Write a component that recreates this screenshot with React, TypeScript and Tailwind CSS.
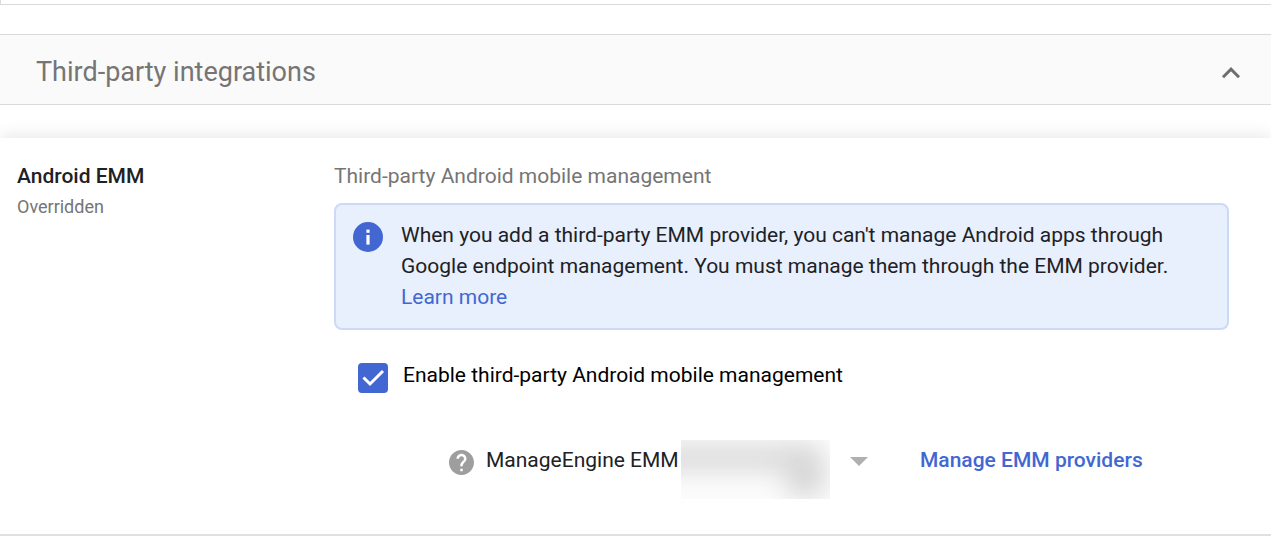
import { useState } from 'react';

function InfoIcon() {
  return (
    <svg viewBox="0 0 30 30" className="mt-0.5 size-[30px] shrink-0" aria-hidden="true">
      <circle cx="15" cy="15" r="15" fill="#4267d2" />
      <rect x="13.4" y="7.6" width="3.2" height="3.2" fill="#fff" />
      <rect x="13.4" y="13" width="3.2" height="9.6" fill="#fff" />
    </svg>
  );
}

function HelpIcon() {
  return (
    <svg viewBox="2 2 20 20" className="size-[25px]" aria-hidden="true">
      <path
        fill="#9e9e9e"
        d="M12 2C6.48 2 2 6.48 2 12s4.48 10 10 10 10-4.48 10-10S17.52 2 12 2zm1 17h-2v-2h2v2zm2.07-7.75l-.9.92C13.45 12.9 13 13.5 13 15h-2v-.5c0-1.1.45-2.1 1.17-2.83l1.24-1.26c.37-.36.59-.86.59-1.41 0-1.1-.9-2-2-2s-2 .9-2 2H8c0-2.21 1.79-4 4-4s4 1.79 4 4c0 .88-.36 1.68-.93 2.25z"
      />
    </svg>
  );
}

function SectionHeader() {
  return (
    <button
      type="button"
      aria-expanded="true"
      className="mt-[29px] flex w-full items-center justify-between border-y border-[#dadada] bg-[#fafafa] pt-5 pr-[30px] pb-[14px] pl-9 text-left"
    >
      <span className="text-[27px] leading-[35px] text-[#757575]">Third-party integrations</span>
      <svg viewBox="0 0 20 20" className="size-5" fill="none" stroke="#6e6e6e" strokeWidth="3" aria-hidden="true">
        <path d="M2 14.2L10 6.2L18 14.2" />
      </svg>
    </button>
  );
}

function InfoBox() {
  return (
    <div className="mt-[11px] flex gap-[18px] rounded-lg border-2 border-[#cddaf6] bg-[#e8effd] px-[17px] py-[15px]">
      <InfoIcon />
      <p className="max-w-[780px] text-[21px] leading-[31px] text-[#202124]">
        When you add a third-party EMM provider, you can't manage Android apps through Google endpoint management. You
        must manage them through the EMM provider.
        <br />
        <a href="#learn-more" className="text-[#4267d2]">
          Learn more
        </a>
      </p>
    </div>
  );
}

function ProviderSelect() {
  return (
    <div className="relative">
      <select
        aria-label="EMM provider"
        className="block w-[382px] appearance-none bg-transparent text-[21px] leading-[31px] text-[#202124] outline-none"
      >
        <option>ManageEngine EMM</option>
      </select>
      {/* account name is hidden behind a smudge */}
      <div className="pointer-events-none absolute top-[-5px] left-[195px] h-[59px] w-[149px] overflow-hidden bg-[#fcfcfc]">
        <div className="absolute top-1 -left-8 h-7 w-[170px] bg-[#dcdcdc] blur-[12px]" />
        <div className="absolute top-5 left-[106px] h-9 w-9 rounded-full bg-[#cccccc] blur-[14px]" />
      </div>
      <svg
        viewBox="0 0 18 9"
        className="pointer-events-none absolute top-3 right-0 h-[9px] w-[18px]"
        aria-hidden="true"
      >
        <path d="M0 0h18L9 9z" fill="#b0b0b0" />
      </svg>
    </div>
  );
}

export default function App() {
  const [enabled, setEnabled] = useState(true);

  return (
    <div className="bg-white font-[Roboto,sans-serif]">
      {/* bottom edge of the previous section */}
      <div className="h-[5px] border-b border-l border-[#dadada]" />

      <SectionHeader />

      <section className="mt-[33px] flex border-b-2 border-[#e0e0e0] pt-[23px] pr-[42px] pb-[58px] pl-[17px] shadow-[0_-2px_16px_rgba(0,0,0,0.10)]">
        <div className="w-[317px] shrink-0">
          <h2 className="text-[21px] leading-[31px] font-medium text-[#202124]">Android EMM</h2>
          <p className="text-lg leading-[29px] text-[#757575]">Overridden</p>
        </div>

        <div className="min-w-0 flex-1">
          <h3 className="text-[21px] leading-[31px] text-[#757575]">Third-party Android mobile management</h3>
          <InfoBox />

          <div className="mt-[30px] flex items-center gap-[15px] pl-6">
            <span className="relative size-[30px]">
              <input
                id="enable-emm"
                type="checkbox"
                checked={enabled}
                onChange={(e) => setEnabled(e.target.checked)}
                className="block size-[30px] appearance-none rounded border-2 border-[#4267d2] checked:bg-[#4267d2]"
              />
              {enabled && (
                <svg
                  viewBox="0 0 30 30"
                  className="pointer-events-none absolute inset-0"
                  fill="none"
                  stroke="#fff"
                  strokeWidth="3"
                  aria-hidden="true"
                >
                  <path d="M5.5 14.5L12 21L25 8" />
                </svg>
              )}
            </span>
            <label htmlFor="enable-emm" className="pb-1 text-[21px] leading-[31px] text-black">
              Enable third-party Android mobile management
            </label>
          </div>

          <div className="mt-[50px] flex items-center pl-[115px]">
            <button type="button" aria-label="Help" className="mt-1 mr-3">
              <HelpIcon />
            </button>
            <ProviderSelect />
            <a href="#manage-providers" className="ml-[52px] text-[21px] leading-[31px] font-medium text-[#4267d2]">
              Manage EMM providers
            </a>
          </div>
        </div>
      </section>
    </div>
  );
}
